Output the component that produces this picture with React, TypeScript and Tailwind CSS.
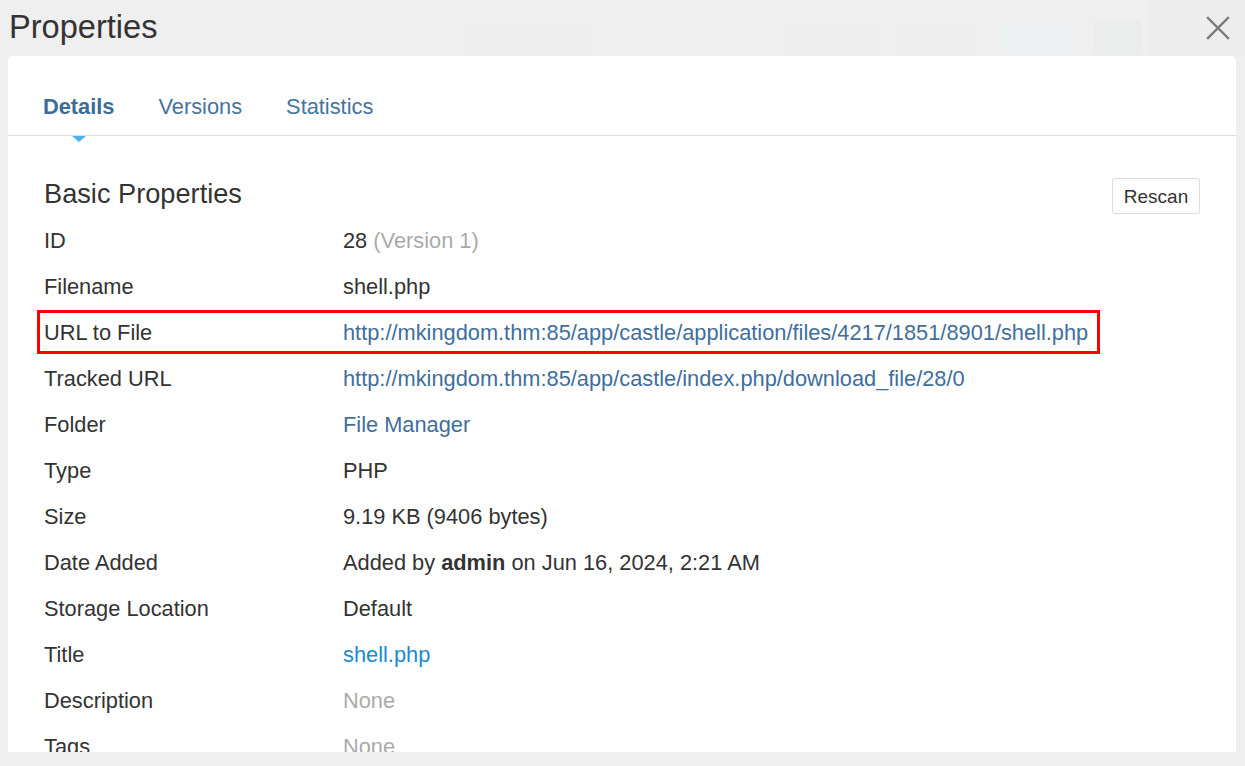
import React from 'react';

type Row = {
  label: string;
  value: React.ReactNode;
  boxed?: boolean;
};

const link = 'text-[#3f6e9c]';
const muted = 'text-[#aaaaaa]';

const rows: Row[] = [
  {
    label: 'ID',
    value: (
      <>
        28 <span className={muted}>(Version 1)</span>
      </>
    ),
  },
  { label: 'Filename', value: 'shell.php' },
  {
    label: 'URL to File',
    value: (
      <span className={link}>http://mkingdom.thm:85/app/castle/application/files/4217/1851/8901/shell.php</span>
    ),
    boxed: true,
  },
  {
    label: 'Tracked URL',
    value: <span className={link}>http://mkingdom.thm:85/app/castle/index.php/download_file/28/0</span>,
  },
  { label: 'Folder', value: <span className={link}>File Manager</span> },
  { label: 'Type', value: 'PHP' },
  { label: 'Size', value: '9.19 KB (9406 bytes)' },
  {
    label: 'Date Added',
    value: (
      <>
        Added by <b className="font-bold">admin</b> on Jun 16, 2024, 2:21 AM
      </>
    ),
  },
  { label: 'Storage Location', value: 'Default' },
  { label: 'Title', value: <span className="text-[#1a8bcf]">shell.php</span> },
  { label: 'Description', value: <span className={muted}>None</span> },
  { label: 'Tags', value: <span className={muted}>None</span> },
];

const tabs = ['Details', 'Versions', 'Statistics'];

const CloseIcon: React.FC = () => (
  <svg width="24" height="24" viewBox="0 0 24 24" fill="none">
    <path d="M2 2L22 22M22 2L2 22" stroke="#7a7a7a" strokeWidth="2.4" strokeLinecap="square" />
  </svg>
);

const PropertyRow: React.FC<Row> = ({ label, value, boxed }) => (
  <div className="relative flex h-[46px] items-start leading-[46px] whitespace-nowrap">
    <div className="w-[299px] shrink-0">{label}</div>
    <div>{value}</div>
    {boxed && (
      <div className="absolute left-[-7px] top-0 h-[44px] w-[1063px] border-[3px] border-[#ff0000]" />
    )}
  </div>
);

export default function App() {
  return (
    <div
      className="w-[1245px] h-[766px] overflow-hidden bg-[#efefef] text-[#333333]"
      style={{ fontFamily: '"Liberation Sans", Arial, sans-serif' }}
    >
      {/* header, with the faint page behind the dialog */}
      <div className="relative h-[56px]">
        <div className="absolute left-[470px] top-[22px] h-[34px] w-[120px] rounded-[3px] bg-[#eeeeee]" />
        <div className="absolute left-[788px] top-[24px] h-[32px] w-[92px] rounded-[3px] bg-[#eeeeee]" />
        <div className="absolute left-[901px] top-[24px] h-[32px] w-[70px] rounded-[3px] bg-[#eeeeee]" />
        <div className="absolute left-[1001px] top-[22px] h-[34px] w-[74px] rounded-[3px] bg-[#ecf0f0]" />
        <div className="absolute left-[1093px] top-[20px] h-[36px] w-[48px] rounded-[3px] bg-[#ebecec]" />
        <div className="absolute left-[1146px] top-0 h-[56px] w-[99px] bg-[#ededed]" />

        <div className="relative flex items-start justify-between">
          <h1 className="pl-[9px] pt-[11px] text-[32.6px] leading-[32px] font-normal text-[#333333]">
            Properties
          </h1>
          <div className="pr-[15px] pt-[16px]">
            <CloseIcon />
          </div>
        </div>
      </div>

      {/* panel */}
      <div className="ml-[8px] h-[696px] w-[1228px] overflow-hidden rounded-t-[5px] bg-white">
        <div className="flex gap-[44px] border-b border-[#dddddd] pl-[35px] text-[21.8px] leading-[30px]">
          {tabs.map((t, i) => (
            <div
              key={t}
              className={`relative pt-[36px] pb-[13px] ${i === 0 ? 'font-bold text-[#3d6c99]' : 'text-[#4673a0]'}`}
            >
              {t}
              {i === 0 && (
                <div className="absolute left-1/2 top-[calc(100%+1px)] -translate-x-1/2 border-l-[7px] border-r-[7px] border-t-[6px] border-l-transparent border-r-transparent border-t-[#4db0f0]" />
              )}
            </div>
          ))}
        </div>

        <div className="px-[36px] pt-[38px]">
          <div className="flex items-start justify-between">
            <h2 className="text-[27.2px] leading-[40px] font-normal">Basic Properties</h2>
            <button className="mt-[4px] flex h-[36px] w-[88px] items-center justify-center rounded-[2px] border border-[#dddddd] bg-white pt-[3px] text-[19px] text-[#333333]">
              Rescan
            </button>
          </div>
          <div className="mt-[4px] text-[21.8px]">
            {rows.map((r) => (
              <PropertyRow key={r.label} {...r} />
            ))}
          </div>
        </div>
      </div>
    </div>
  );
}
